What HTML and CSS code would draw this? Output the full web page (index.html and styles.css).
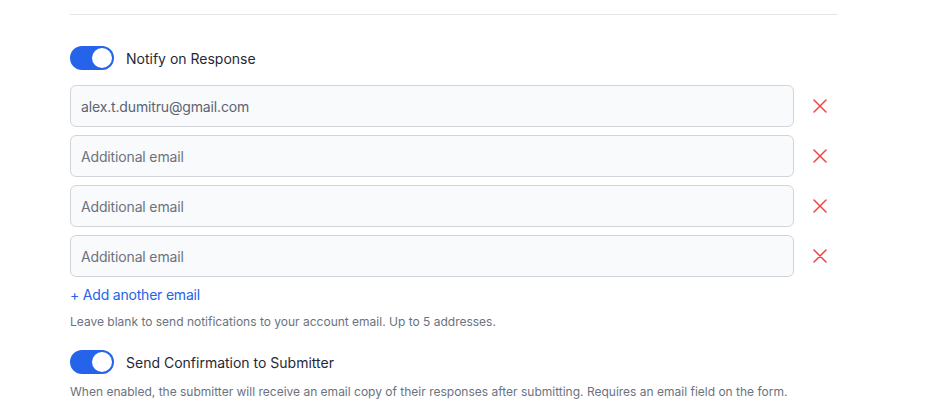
FILE: index.html
```html
<!DOCTYPE html>
<html lang="en">
<head>
<meta charset="utf-8">
<title>Notifications</title>
<link rel="stylesheet" href="styles.css">
</head>
<body>
<div class="panel">
  <hr class="divider">
  <section class="section">
    <label class="toggle-row">
      <span class="toggle on"><span class="knob"></span></span>
      <span class="toggle-label">Notify on Response</span>
    </label>
    <div class="email-list">
      <div class="email-row">
        <input class="email-input" type="text" value="alex.t.dumitru@gmail.com">
        <button class="remove" type="button" aria-label="Remove"><svg width="14" height="14" viewBox="0 0 14 14"><path d="M1 1L13 13M13 1L1 13" stroke="#ef4444" stroke-width="1.5" stroke-linecap="round" fill="none"/></svg></button>
      </div>
      <div class="email-row">
        <input class="email-input" type="text" placeholder="Additional email">
        <button class="remove" type="button" aria-label="Remove"><svg width="14" height="14" viewBox="0 0 14 14"><path d="M1 1L13 13M13 1L1 13" stroke="#ef4444" stroke-width="1.5" stroke-linecap="round" fill="none"/></svg></button>
      </div>
      <div class="email-row">
        <input class="email-input" type="text" placeholder="Additional email">
        <button class="remove" type="button" aria-label="Remove"><svg width="14" height="14" viewBox="0 0 14 14"><path d="M1 1L13 13M13 1L1 13" stroke="#ef4444" stroke-width="1.5" stroke-linecap="round" fill="none"/></svg></button>
      </div>
      <div class="email-row">
        <input class="email-input" type="text" placeholder="Additional email">
        <button class="remove" type="button" aria-label="Remove"><svg width="14" height="14" viewBox="0 0 14 14"><path d="M1 1L13 13M13 1L1 13" stroke="#ef4444" stroke-width="1.5" stroke-linecap="round" fill="none"/></svg></button>
      </div>
    </div>
    <a class="add-link" href="#">+ Add another email</a>
    <p class="help">Leave blank to send notifications to your account email. Up to 5 addresses.</p>
  </section>
  <section class="section second">
    <label class="toggle-row">
      <span class="toggle on"><span class="knob"></span></span>
      <span class="toggle-label">Send Confirmation to Submitter</span>
    </label>
    <p class="help desc">When enabled, the submitter will receive an email copy of their responses after submitting. Requires an email field on the form.</p>
  </section>
</div>
</body>
</html>
```

FILE: styles.css
```css
* { box-sizing: border-box; }
html, body { margin: 0; padding: 0; background: #ffffff; }
body {
  font-family: Inter, "Noto Sans", "Liberation Sans", sans-serif;
  color: #1f2937;
}
.panel {
  width: 768px;
  margin-left: 70px;
  padding-top: 14px;
}
.divider {
  margin: 0;
  border: 0;
  border-top: 1px solid #e5e7eb;
  height: 0;
}
.section {
  display: flex;
  flex-direction: column;
  padding-top: 31px;
}
.section.second { padding-top: 20px; }
.toggle-row {
  display: flex;
  align-items: center;
  gap: 12px;
  height: 24px;
}
.toggle {
  width: 44px;
  height: 24px;
  border-radius: 12px;
  background: #2563eb;
  display: flex;
  align-items: center;
  justify-content: flex-end;
  padding: 2px;
  flex: none;
}
.knob {
  width: 20px;
  height: 20px;
  border-radius: 50%;
  background: #ffffff;
}
.toggle-label {
  font-size: 14px;
  color: #1f2937;
  line-height: 20px;
  padding-top: 2px;
}
.email-list {
  display: flex;
  flex-direction: column;
  gap: 8px;
  margin-top: 15px;
}
.email-row {
  display: flex;
  align-items: center;
  gap: 8px;
}
.email-input {
  flex: 1;
  height: 42px;
  border: 1px solid #d1d5db;
  border-radius: 6px;
  background: #f9fafb;
  padding: 0 10px;
  font-family: inherit;
  font-size: 14px;
  letter-spacing: -0.15px;
  color: #5b6472;
  outline: none;
}
.email-input::placeholder { color: #6b7280; opacity: 1; }
.remove {
  width: 36px;
  height: 36px;
  border: 0;
  background: transparent;
  padding: 0;
  display: flex;
  align-items: center;
  justify-content: center;
  cursor: pointer;
}
.add-link {
  margin-top: 8px;
  font-size: 14px;
  line-height: 20px;
  letter-spacing: -0.2px;
  color: #2563eb;
  text-decoration: none;
  align-self: flex-start;
}
.help {
  margin: 9px 0 0;
  font-size: 12px;
  line-height: 16px;
  color: #6b7280;
}
.help.desc { margin-top: 10px; }
```
